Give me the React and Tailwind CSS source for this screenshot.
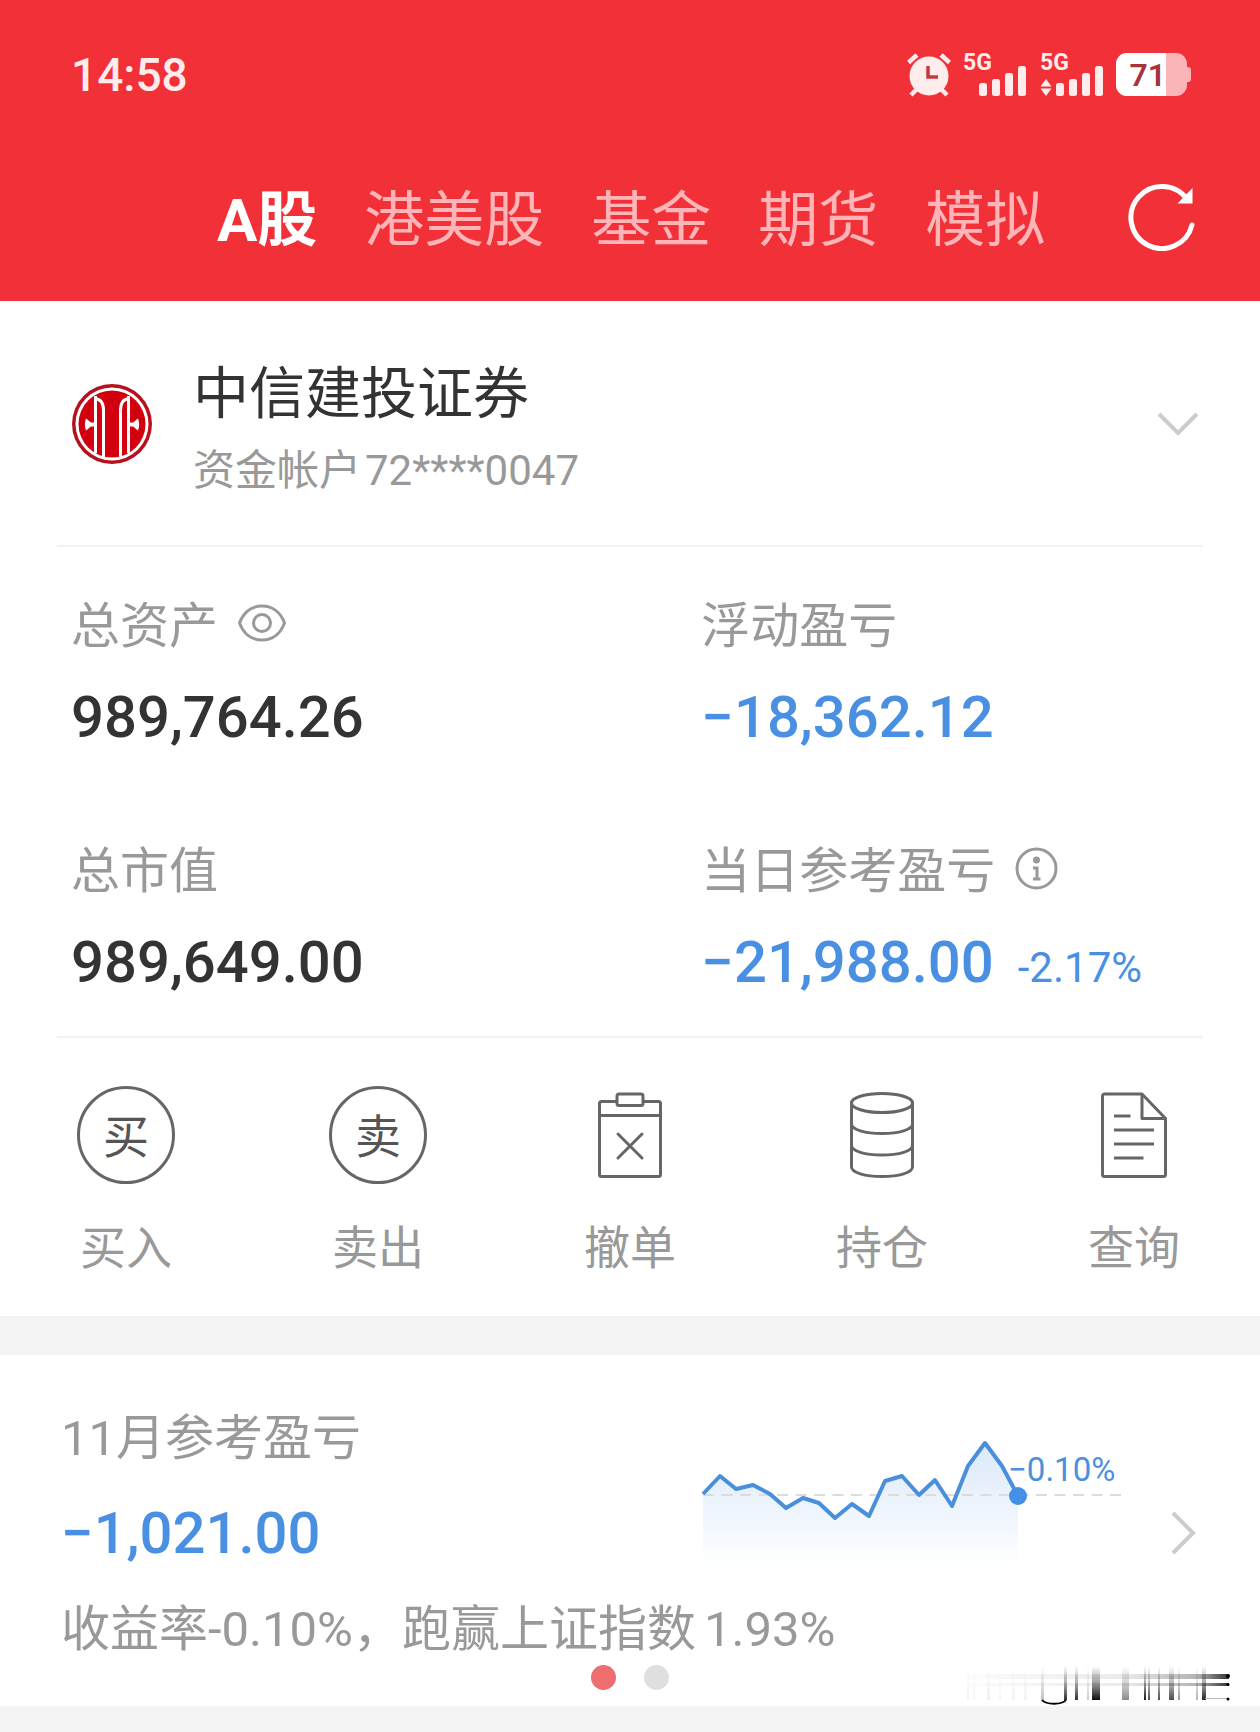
const tabs = ['A股', '港美股', '基金', '期货', '模拟'];

function AlarmIcon() {
  return (
    <svg width="44" height="44" viewBox="0 0 44 44" fill="none" aria-label="闹钟">
      <g stroke="#ffecec" strokeWidth="4.500">
        <path d="M1.500 9.500 10 2" />
        <path d="M42.500 9.500 34 2" />
        <path d="M4 42l6-6M40 42l-6-6" />
      </g>
      <circle cx="22" cy="23" r="19.500" fill="#ffecec" />
      <path d="M21 13v11h10" stroke="#c23a40" strokeWidth="3.500" />
    </svg>
  );
}

function Signal({ arrows }) {
  return (
    <div className="flex flex-col">
      <span className="h-[13px] text-[23px] leading-[20px] font-bold">5G</span>
      <svg width="64" height="30" viewBox="0 0 64 30" fill="#ffecec" aria-hidden="true">
        {arrows && <path d="M6 13l5.500 7.500H0.500zM0.500 22.500h11L6 30z" />}
        <rect x="16" y="17" width="8" height="13" rx="2.500" />
        <rect x="29" y="13" width="8" height="17" rx="2.500" />
        <rect x="42" y="7" width="8" height="23" rx="2.500" />
        <rect x="55" y="0" width="8" height="30" rx="2.500" />
      </svg>
    </div>
  );
}

function Battery() {
  return (
    <div className="flex items-center">
      <div className="flex h-[43px] w-[71px] items-center overflow-hidden rounded-[11px] bg-[#fbb4b7]">
        <span className="flex h-full w-[50px] items-center justify-end bg-white text-[32px] leading-none font-semibold text-[#a8343b]">
          71
        </span>
      </div>
      <span className="h-[15px] w-[4px] rounded-r-[3px] bg-[#fbb4b7]" />
    </div>
  );
}

function RefreshIcon() {
  return (
    <svg width="68" height="68" viewBox="0 0 68 68" fill="none">
      <path d="M59.500 17A31 31 0 1 0 64 42" stroke="#fff" strokeWidth="5" strokeLinecap="round" />
      <path d="M64.500 5v15.500h-15z" fill="#fff" />
    </svg>
  );
}

function CiticLogo() {
  return (
    <svg width="80" height="80" viewBox="0 0 80 80" aria-label="中信建投证券">
      <circle cx="40" cy="40" r="40" fill="#b8101c" />
      <circle cx="40" cy="40" r="36.500" fill="#fff" />
      <circle cx="40" cy="40" r="33.500" fill="#d2000f" />
      <g fill="none" stroke="#fff" strokeWidth="3">
        <path d="M23.500 12V69" />
        <path d="M56.500 12V69" />
        <path d="M23 14.500c6 .5 8.500 4.500 8.500 12V73" />
        <path d="M57 14.500c-6 .5-8.500 4.500-8.500 12V73" />
      </g>
      <path d="M23 38.500h-4c-2-1-3-3-5-4-1.500 3.500-1.500 8.500 0 12 2-1 3-3 5-4h4z" fill="#fff" />
      <path d="M57 38.500h4c2-1 3-3 5-4 1.500 3.500 1.500 8.500 0 12-2-1-3-3-5-4h-4z" fill="#fff" />
    </svg>
  );
}

function EyeIcon() {
  return (
    <svg width="48" height="38" viewBox="0 0 48 38" fill="none" stroke="#999" strokeWidth="3">
      <path d="M1.500 19C5 9.500 12.500 2 24 2s19 7.500 22.500 17C43 28.500 35.500 36 24 36S5 28.500 1.500 19z" />
      <circle cx="24" cy="19" r="8.500" />
    </svg>
  );
}

function InfoIcon() {
  return (
    <svg width="43" height="43" viewBox="0 0 43 43" fill="none" stroke="#999" strokeWidth="3">
      <circle cx="21.500" cy="21.500" r="19.500" />
      <circle cx="21.500" cy="13" r="3.500" fill="#999" stroke="none" />
      <path d="M18 21h4v11M18 32h7.500" />
    </svg>
  );
}

function CircleChar({ children }) {
  return (
    <span className="flex size-[98px] items-center justify-center rounded-full border-3 border-[#666] pt-1 text-[46px] leading-none text-[#555]">
      {children}
    </span>
  );
}

function CancelIcon() {
  return (
    <svg width="64" height="86" viewBox="0 0 64 86" fill="none" stroke="#666" strokeWidth="3">
      <path d="M18 9.500H3.500a2 2 0 0 0-2 2v71a2 2 0 0 0 2 2h57a2 2 0 0 0 2-2v-71a2 2 0 0 0-2-2H46" />
      <rect x="19" y="2" width="26" height="11.500" rx="2" />
      <path d="M1.500 23.500h61" />
      <path d="M20 42l24 24M44 42L20 66" strokeLinecap="round" />
    </svg>
  );
}

function HoldingsIcon() {
  return (
    <svg width="64" height="86" viewBox="0 0 64 86" fill="none" stroke="#666" strokeWidth="3">
      <ellipse cx="32" cy="11" rx="30.500" ry="9.500" />
      <path d="M1.500 11v64c0 5.500 13.500 9.500 30.500 9.500s30.500-4 30.500-9.500V11" />
      <path d="M1.500 32c0 5.500 13.500 9.500 30.500 9.500s30.500-4 30.500-9.500" />
      <path d="M1.500 53.500c0 5.500 13.500 9.500 30.500 9.500s30.500-4 30.500-9.500" />
    </svg>
  );
}

function QueryIcon() {
  return (
    <svg width="66" height="86" viewBox="0 0 66 86" fill="none" stroke="#666" strokeWidth="3" strokeLinejoin="round">
      <path d="M41 2H3.500a2 2 0 0 0-2 2v78.500a2 2 0 0 0 2 2h59a2 2 0 0 0 2-2V26.500z" />
      <path d="M41 2v24.500h23.500" />
      <path d="M13 24h16.500M13 38h40M13 52h40M13 66h29.500" />
    </svg>
  );
}

const actions = [
  { label: '买入', icon: <CircleChar>买</CircleChar> },
  { label: '卖出', icon: <CircleChar>卖</CircleChar> },
  { label: '撤单', icon: <CancelIcon /> },
  { label: '持仓', icon: <HoldingsIcon /> },
  { label: '查询', icon: <QueryIcon /> },
];

function Stat({ label, icon, iconLabel, value, extra, tone }) {
  return (
    <div className="pl-[14px]">
      <dt className="flex h-[60px] items-center gap-5 text-[49px] leading-[60px] text-[#999]">
        {label}
        {icon && (
          <button type="button" aria-label={iconLabel} className="pb-2">
            {icon}
          </button>
        )}
      </dt>
      <dd className={'mt-6 flex items-baseline gap-6 text-[58px] leading-[72px] font-medium ' + tone}>
        <span>{value}</span>
        {extra && <span className="text-[42px] font-normal">{extra}</span>}
      </dd>
    </div>
  );
}

const LINE =
  'M0 55 17 37 33 50 50 46 67 55 83 69 100 59 116 64 132 79 149 65 166 77 182 42 199 37 216 56 232 41 249 67 265 27 282 4 299 27 315 57';

function ProfitChart() {
  return (
    <div className="relative h-[130px] w-[420px]">
      <svg width="420" height="130" viewBox="0 0 420 130" fill="none" className="overflow-visible" aria-label="盈亏走势">
        <defs>
          <linearGradient id="area" x1="0" y1="0" x2="0" y2="1">
            <stop offset="0" stopColor="#4a90e2" stopOpacity="0.2" />
            <stop offset="1" stopColor="#4a90e2" stopOpacity="0" />
          </linearGradient>
        </defs>
        <path d={LINE + 'V128H0z'} fill="url(#area)" />
        <path d="M0 56H420" stroke="#dcdcdc" strokeWidth="2" strokeDasharray="11 7.500" />
        <path d={LINE} stroke="#4a8fdc" strokeWidth="4" strokeLinejoin="round" />
        <circle cx="315" cy="57" r="9" fill="#468fe8" />
      </svg>
      <span className="absolute top-[12px] left-[305px] text-[33px] leading-[38px] text-[#4a90dc]">−0.10%</span>
    </div>
  );
}

const streaks = [
  [0, 2, 0.05], [6, 2, 0.04], [20, 3, 0.06], [32, 2, 0.04], [45, 3, 0.05], [57, 3, 0.05],
  [74, 3, 0.25], [97, 3, 0.8], [108, 3, 0.8], [120, 2, 0.2], [125, 8, 0.95], [155, 7, 0.45], [177, 2, 0.9],
  [181, 2, 0.7], [191, 2, 0.7], [202, 5, 0.7], [211, 2, 0.4], [229, 2, 0.3], [235, 4, 0.85],
];

function Smear() {
  return (
    <svg width="265" height="42" viewBox="0 0 265 42" aria-hidden="true">
      <defs>
        <linearGradient id="fall" x1="0" y1="0" x2="0" y2="1">
          <stop offset="0" stopColor="#000" stopOpacity="0" />
          <stop offset="0.5" stopColor="#000" stopOpacity="0.4" />
          <stop offset="1" stopColor="#000" />
        </linearGradient>
        <linearGradient id="run" x1="0" y1="0" x2="1" y2="0">
          <stop offset="0" stopColor="#000" stopOpacity="0.01" />
          <stop offset="0.6" stopColor="#000" stopOpacity="0.08" />
          <stop offset="0.88" stopColor="#000" stopOpacity="0.3" />
          <stop offset="1" stopColor="#000" stopOpacity="0.8" />
        </linearGradient>
      </defs>
      {streaks.map(([x, w, o]) => (
        <rect key={x} x={x} y="2" width={w} height="34" fill="url(#fall)" opacity={o} />
      ))}
      <rect x="0" y="10" width="262" height="5" fill="url(#run)" />
      <rect x="0" y="19" width="262" height="3" fill="url(#run)" />
      <rect x="238" y="34" width="24" height="1" fill="#bbb" />
      <circle cx="261" cy="12" r="2" />
      <circle cx="261" cy="20.500" r="1.500" />
      <circle cx="261" cy="35" r="1.500" />
      <path d="M75 36c4 5 20 5 24 0" fill="none" stroke="#000" strokeWidth="2" />
    </svg>
  );
}

export default function App() {
  return (
    <div className="min-h-screen bg-[#f4f4f4] font-[Roboto,'Noto_Sans_CJK_SC',sans-serif]">
      <header className="bg-[#f23038] pb-[40px] text-white">
        <div className="flex items-start justify-between pt-[53px] pr-[69px] pl-[71px] text-[#ffecec]">
          <time className="text-[46px] leading-[44px] font-medium">14:58</time>
          <div className="flex items-start">
            <AlarmIcon />
            <div className="ml-[12px] flex gap-[13px]">
              <Signal />
              <Signal arrows />
            </div>
            <div className="ml-[12px]">
              <Battery />
            </div>
          </div>
        </div>
        <div className="mt-[76px] flex items-center justify-between pr-[64px] pl-[217px]">
          <nav className="flex gap-[47px] pt-2">
            {tabs.map((t, i) => (
              <button
                key={t}
                type="button"
                className={
                  i === 0
                    ? 'text-[60px] leading-[80px] font-bold'
                    : 'text-[60px] leading-[80px] text-[#ffb5b8]'
                }
              >
                {t}
              </button>
            ))}
          </nav>
          <button type="button" aria-label="刷新">
            <RefreshIcon />
          </button>
        </div>
      </header>

      <main>
        <section className="bg-white pb-[38px]">
          <div className="mx-[57px] flex items-center border-b-2 border-[#f2f2f2] pt-[45px] pr-[4px] pb-[44px] pl-[15px]">
            <CiticLogo />
            <div className="ml-[41px] grow pt-3">
              <h1 className="text-[56px] leading-[72px] text-[#333]">中信建投证券</h1>
              <p className="mt-[11px] text-[42px] leading-[60px] text-[#999]">
                资金帐户<span className="ml-1">72****0047</span>
              </p>
            </div>
            <button type="button" aria-label="切换账户">
              <svg width="42" height="26" viewBox="0 0 42 26" fill="none" stroke="#ccc" strokeWidth="4">
                <path d="M2 3l19 19L40 3" />
              </svg>
            </button>
          </div>

          <dl className="mx-[57px] grid grid-cols-[11fr_9fr] gap-y-[89px] border-b-2 border-[#f2f2f2] pt-[50px] pb-[32px]">
            <Stat label="总资产" icon={<EyeIcon />} iconLabel="隐藏金额" value="989,764.26" tone="text-[#333]" />
            <Stat label="浮动盈亏" value="−18,362.12" tone="text-[#4a90e2]" />
            <Stat label="总市值" value="989,649.00" tone="text-[#333]" />
            <Stat
              label="当日参考盈亏"
              icon={<InfoIcon />}
              iconLabel="说明"
              value="−21,988.00"
              extra="-2.17%"
              tone="text-[#4a90e2]"
            />
          </dl>

          <div className="grid grid-cols-5 pt-[47px]">
            {actions.map((a) => (
              <button key={a.label} type="button" className="flex flex-col items-center">
                <span className="flex h-[100px] items-center justify-center">{a.icon}</span>
                <span className="mt-[33px] text-[46px] leading-[60px] text-[#999]">{a.label}</span>
              </button>
            ))}
          </div>
        </section>

        <section className="relative mt-[39px] bg-white pt-[54px] pb-[16px]">
          <a href="#profit" className="flex items-end justify-between pr-[64px] pl-[61px]">
            <div>
              <h2 className="text-[49px] leading-[60px] text-[#999]">11月参考盈亏</h2>
              <p className="mt-[28px] text-[58px] leading-[72px] font-medium text-[#4a90e2]">−1,021.00</p>
            </div>
            <div className="flex items-end gap-[47px]">
              <ProfitChart />
              <span className="pb-[14px]">
                <svg width="26" height="44" viewBox="0 0 26 44" fill="none" stroke="#ccc" strokeWidth="4">
                  <path d="M3 2l20 20L3 42" />
                </svg>
              </span>
            </div>
          </a>
          <p className="mt-[31px] pl-[61px] text-[49px] leading-[60px] text-[#999]">
            收益率-0.10%，跑赢上证指数<span className="ml-2">1.93%</span>
          </p>
          <div className="mt-[5px] flex justify-center gap-[28px]">
            <span className="size-[25px] rounded-full bg-[#ee6e70]" />
            <span className="size-[25px] rounded-full bg-[#dfdfdf]" />
          </div>
          <div className="absolute right-[28px] bottom-0">
            <Smear />
          </div>
        </section>
      </main>
    </div>
  );
}
